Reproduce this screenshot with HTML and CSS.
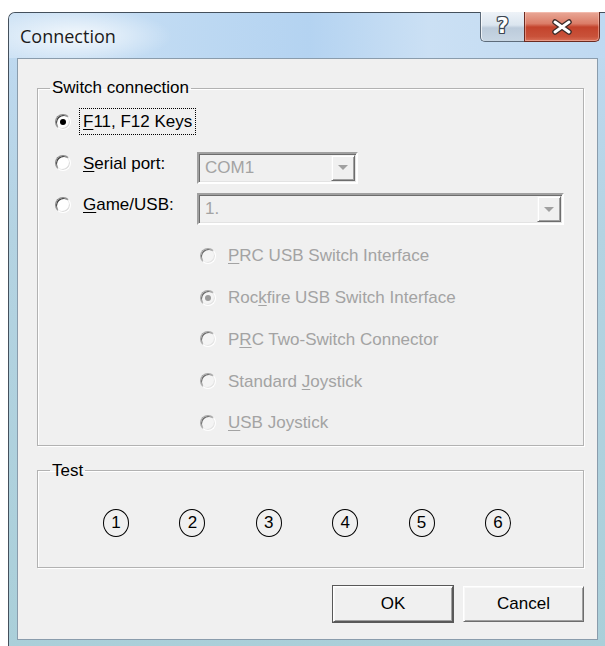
FILE: index.html
```html
<!DOCTYPE html>
<html lang="en">
<head>
<meta charset="utf-8">
<title>Connection</title>
<link rel="stylesheet" href="styles.css">
</head>
<body>
<div class="window">
  <div class="titlebar">
    <span class="title">Connection</span>
    <div class="caption-buttons">
      <div class="cap-btn cap-help"><span class="help-glyph">?</span></div>
      <div class="cap-btn cap-close">
        <svg width="22" height="16" viewBox="0 0 22 16" aria-hidden="true">
          <path d="M4 3 L18 13 M18 3 L4 13" stroke="#3a2a28" stroke-width="5.5" stroke-linecap="round"/>
          <path d="M4 3 L18 13 M18 3 L4 13" stroke="#ffffff" stroke-width="3" stroke-linecap="round"/>
        </svg>
      </div>
    </div>
  </div>

  <div class="client">
    <fieldset class="group group-switch">
      <legend>Switch connection</legend>
      <div class="options">
        <div class="row">
          <label class="choice">
            <span class="radio checked"></span>
            <span class="text focused"><u>F</u>11, F12 Keys</span>
          </label>
        </div>
        <div class="row">
          <label class="choice">
            <span class="radio"></span>
            <span class="text"><u>S</u>erial port:</span>
          </label>
          <div class="combo combo-short">
            <span class="combo-value">COM1</span>
            <span class="combo-drop"><span class="arrow"></span></span>
          </div>
        </div>
        <div class="row">
          <label class="choice">
            <span class="radio"></span>
            <span class="text"><u>G</u>ame/USB:</span>
          </label>
          <div class="combo combo-long">
            <span class="combo-value">1.</span>
            <span class="combo-drop"><span class="arrow"></span></span>
          </div>
        </div>
      </div>

      <div class="sub-options">
        <div class="row">
          <label class="choice disabled">
            <span class="radio"></span>
            <span class="text"><u>P</u>RC USB Switch Interface</span>
          </label>
        </div>
        <div class="row">
          <label class="choice disabled">
            <span class="radio checked"></span>
            <span class="text">Roc<u>k</u>fire USB Switch Interface</span>
          </label>
        </div>
        <div class="row">
          <label class="choice disabled">
            <span class="radio"></span>
            <span class="text">P<u>R</u>C Two-Switch Connector</span>
          </label>
        </div>
        <div class="row">
          <label class="choice disabled">
            <span class="radio"></span>
            <span class="text">Standard <u>J</u>oystick</span>
          </label>
        </div>
        <div class="row">
          <label class="choice disabled">
            <span class="radio"></span>
            <span class="text"><u>U</u>SB Joystick</span>
          </label>
        </div>
      </div>
    </fieldset>

    <fieldset class="group group-test">
      <legend>Test</legend>
      <div class="switches">
        <span class="switch-dot">1</span>
        <span class="switch-dot">2</span>
        <span class="switch-dot">3</span>
        <span class="switch-dot">4</span>
        <span class="switch-dot">5</span>
        <span class="switch-dot">6</span>
      </div>
    </fieldset>

    <div class="actions">
      <button class="btn btn-default" type="button">OK</button>
      <button class="btn" type="button">Cancel</button>
    </div>
  </div>
</div>
</body>
</html>
```

FILE: styles.css
```css
* {
  box-sizing: border-box;
}

html,
body {
  margin: 0;
  padding: 0;
  background: #ffffff;
}

body {
  width: 605px;
  height: 646px;
  overflow: hidden;
  font-family: "Liberation Sans", Arial, sans-serif;
  font-size: 17px;
  color: #000000;
}

/* ---- window frame ---- */
.window {
  margin: 12px 0 0 8px;
  width: 597px;
  height: 634px;
  border-left: 1px solid #44505c;
  border-top: 1px solid #44505c;
  border-top-left-radius: 7px;
  background: linear-gradient(180deg, #c4dcf2 0, #bdd8ee 60px, #b4d3e2 220px, #aacfd9 640px);
  display: flex;
  flex-direction: column;
}

.titlebar {
  height: 45px;
  flex: none;
  display: flex;
  justify-content: space-between;
  align-items: flex-start;
  border-top-left-radius: 6px;
  background:
    radial-gradient(ellipse 95px 28px at 68px 23px, rgba(255, 255, 255, 0.8), rgba(255, 255, 255, 0)),
    linear-gradient(90deg, #cfe3f5 0, #bcd8f2 200px, #b4d3f1 300px, #cbe0f4 420px, #bfd9f1 597px);
}

.title {
  font-family: "Open Sans", "Noto Sans", sans-serif;
  font-size: 18px;
  line-height: 24px;
  padding: 11px 0 0 11px;
  color: #1b1b1b;
}

.caption-buttons {
  display: flex;
  margin: -1px 5px 0 0;
}

.cap-btn {
  height: 30px;
  display: flex;
  align-items: center;
  justify-content: center;
  border: 1px solid #5d6b7a;
  border-top: none;
}

.cap-help {
  width: 44px;
  border-right: none;
  border-bottom-left-radius: 5px;
  background: linear-gradient(180deg, #eef3f8 0, #dbe5ef 45%, #bccbdb 55%, #c8d6e3 100%);
  box-shadow: inset 1px 0 0 rgba(255, 255, 255, 0.7);
}

.help-glyph {
  font-family: "DejaVu Sans", sans-serif;
  font-weight: bold;
  font-size: 21px;
  line-height: 1;
  color: #ffffff;
  text-shadow:
    1px 0 0 #3c4652, -1px 0 0 #3c4652, 0 1px 0 #3c4652, 0 -1px 0 #3c4652,
    1px 1px 0 #3c4652, -1px -1px 0 #3c4652, 1px -1px 0 #3c4652, -1px 1px 0 #3c4652;
}

.cap-close {
  width: 76px;
  border-color: #6b2a20;
  border-bottom-right-radius: 5px;
  background: linear-gradient(180deg, #e9a897 0, #db7d68 40%, #c3432c 52%, #c9523a 85%, #d97058 100%);
  box-shadow: inset 0 0 0 1px rgba(255, 210, 200, 0.45);
}

/* ---- client area ---- */
.client {
  flex: 1;
  margin: 0 7px 6px 8px;
  border: 1px solid #8a9cac;
  background: #f0f0f0;
  display: flex;
  flex-direction: column;
}

.group {
  margin: 20px 13px 0 19px;
  padding: 0;
  border: 1px solid #b2b2b2;
  box-shadow: 1px 1px 0 #ffffff, inset 1px 1px 0 #ffffff;
  min-width: 0;
}

.group legend {
  margin-left: 12px;
  padding: 0 2px;
  line-height: 18px;
  color: #000000;
}

.group-test {
  margin-top: 16px;
}

/* ---- option rows ---- */
.options {
  padding: 4px 0 0 17px;
}

.options .row {
  height: 41.5px;
  display: flex;
  align-items: center;
}

.sub-options {
  padding: 9.5px 0 1px 162px;
}

.sub-options .row {
  height: 41.75px;
  display: flex;
  align-items: center;
}

.choice {
  display: flex;
  align-items: center;
}

.options .choice {
  width: 142px;
}

.text {
  padding: 4px 3px 3px 3px;
  border: 1px dotted transparent;
  line-height: 18px;
  white-space: nowrap;
}

.text.focused {
  border-color: #000000;
}

.text u {
  text-decoration-thickness: 1px;
  text-underline-offset: 2px;
}

.choice.disabled .text {
  color: #a3a3a3;
}

/* classic sunken radio */
.radio {
  position: relative;
  width: 16px;
  height: 16px;
  flex: none;
  margin-right: 8px;
  border-radius: 50%;
  border: 1px solid;
  border-color: #8a8a8a #ffffff #ffffff #8a8a8a;
  background: #ffffff;
  box-shadow: inset 1px 1px 0 #3e3e3e, inset -1px -1px 0 #dcdcdc;
}

.radio.checked::after {
  content: "";
  position: absolute;
  left: 4px;
  top: 4px;
  width: 6px;
  height: 6px;
  border-radius: 50%;
  background: #000000;
}

.choice.disabled .radio {
  background: #f4f4f4;
  border-color: #a8a8a8 #ffffff #ffffff #a8a8a8;
  box-shadow: inset 1px 1px 0 #6a6a6a, inset -1px -1px 0 #e4e4e4;
}

.choice.disabled .radio.checked::after {
  background: #9a9a9a;
}

/* ---- disabled combo boxes ---- */
.combo {
  height: 32px;
  margin-top: 9px;
  display: flex;
  align-items: stretch;
  border: 2px solid;
  border-color: #a0a0a0 #ffffff #ffffff #a0a0a0;
  box-shadow: inset 1px 1px 0 #6d6d6d, inset -1px -1px 0 #e3e3e3;
  background: #f0f0f0;
  padding: 1px;
}

.combo-short {
  width: 161px;
}

.combo-long {
  width: 367px;
}

.combo-value {
  flex: 1;
  padding-left: 5px;
  line-height: 26px;
  color: #a3a3a3;
}

.combo-drop {
  width: 24px;
  display: flex;
  align-items: center;
  justify-content: center;
  border: 1px solid;
  border-color: #f4f4f4 #6d6d6d #6d6d6d #f4f4f4;
  box-shadow: inset 1px 1px 0 #ffffff, inset -1px -1px 0 #a0a0a0;
  background: #f0f0f0;
}

.arrow {
  width: 0;
  height: 0;
  border-left: 5px solid transparent;
  border-right: 5px solid transparent;
  border-top: 5px solid #a0a0a0;
}

/* ---- test indicators ---- */
.switches {
  display: flex;
  gap: 50.4px;
  padding: 29px 0 30px 65px;
}

.switch-dot {
  width: 26px;
  height: 28px;
  flex: none;
  border: 1.5px solid #000000;
  border-radius: 50%;
  display: flex;
  align-items: center;
  justify-content: center;
  font-size: 17px;
  line-height: 1;
}

/* ---- dialog buttons ---- */
.actions {
  display: flex;
  justify-content: flex-end;
  gap: 10px;
  margin: 18px 13px 0 0;
}

.btn {
  width: 121px;
  height: 36px;
  padding: 0;
  font-family: "Liberation Sans", Arial, sans-serif;
  font-size: 17px;
  color: #000000;
  background: #f0f0f0;
  border: 1px solid;
  border-color: #ffffff #6d6d6d #6d6d6d #ffffff;
  box-shadow: inset 1px 1px 0 #f8f8f8, inset -1px -1px 0 #a0a0a0;
}

.btn-default {
  width: 120px;
  outline: 1px solid #595959;
  outline-offset: 0;
  border-color: #ffffff #595959 #595959 #ffffff;
}
```
